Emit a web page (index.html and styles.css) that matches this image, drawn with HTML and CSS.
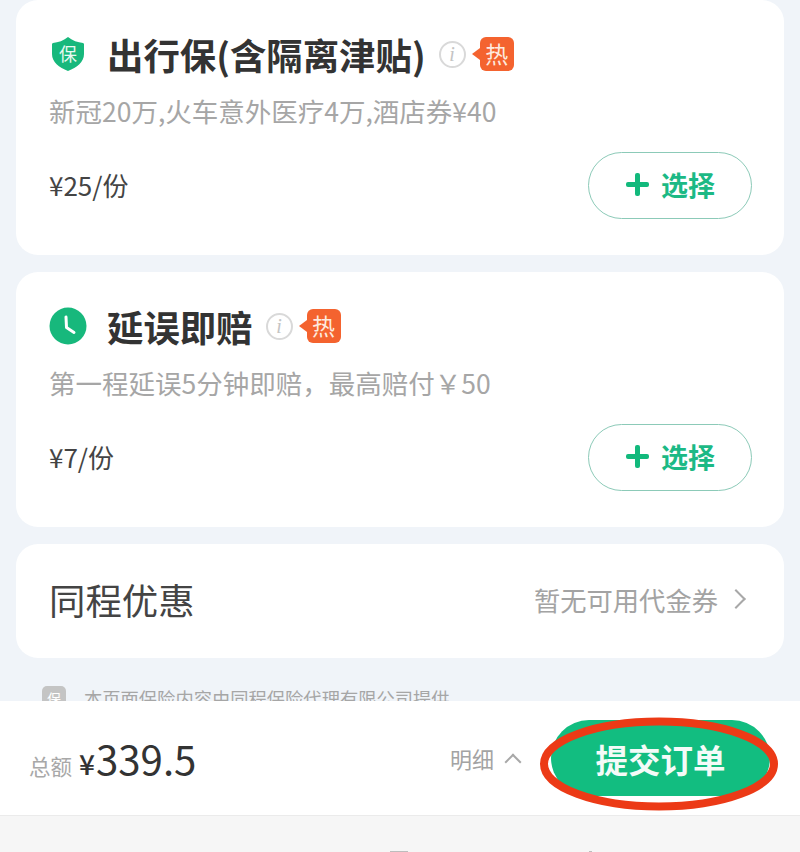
FILE: index.html
```html
<!DOCTYPE html>
<html lang="zh-CN">
<head>
    <meta charset="UTF-8">
    <meta name="viewport" content="width=device-width, initial-scale=1.0">
    <title>提交订单</title>
    <link rel="stylesheet" href="styles.css">
</head>
<body>
    <div class="content">
        <div class="card card-product">
            <div class="title-row">
                <svg class="icon-shield" viewBox="0 0 32 34">
                    <path d="M16 0 C20 3.500 26 5.500 31 6 Q32 6.200 32 7.500 L32 17 C32 25 25 30.500 16 34 C7 30.500 0 25 0 17 L0 7.500 Q0 6.200 1 6 C6 5.500 12 3.500 16 0 Z" fill="#17b87c"/>
                    <text x="16" y="23.500" text-anchor="middle" class="shield-text">保</text>
                </svg>
                <h2>出行保(含隔离津贴)</h2>
                <span class="info">i</span>
                <span class="hot">热</span>
            </div>
            <p class="desc">新冠20万,火车意外医疗4万,酒店券¥40</p>
            <div class="price-row">
                <span class="price">¥25/份</span>
                <button class="btn-select"><span class="plus"></span>选择</button>
            </div>
        </div>

        <div class="card card-product">
            <div class="title-row">
                <svg class="icon-clock" viewBox="0 0 38 38">
                    <circle cx="19" cy="19" r="18.500" fill="#17b87c"/>
                    <path d="M17 10 L17.500 20.500 L25 25.500" fill="none" stroke="#fff" stroke-width="3" stroke-linecap="round" stroke-linejoin="round"/>
                </svg>
                <h2>延误即赔</h2>
                <span class="info">i</span>
                <span class="hot">热</span>
            </div>
            <p class="desc">第一程延误5分钟即赔，最高赔付￥50</p>
            <div class="price-row">
                <span class="price">¥7/份</span>
                <button class="btn-select"><span class="plus"></span>选择</button>
            </div>
        </div>

        <div class="card card-coupon">
            <span class="coupon-title">同程优惠</span>
            <span class="coupon-value">暂无可用代金券<span class="chevron-right"></span></span>
        </div>

        <div class="notice">
            <span class="notice-icon">保</span>
            <span>本页面保险内容由同程保险代理有限公司提供</span>
        </div>
    </div>

    <div class="bar">
        <div class="total">
            <span class="total-label">总额</span>
            <span class="total-yen">¥</span>
            <span class="total-num">339.5</span>
        </div>
        <div class="detail">明细<span class="chevron-up"></span></div>
        <div class="submit-wrap">
            <button class="btn-submit">提交订单</button>
            <svg class="circle-mark" viewBox="0 0 240 100">
                <ellipse cx="120" cy="50" rx="115" ry="42.500" fill="none" stroke="#ec3a16" stroke-width="8"/>
            </svg>
        </div>
    </div>
    <div class="bottom-strip">
        <span class="nav-tip nav-tip-a"></span>
        <span class="nav-tip nav-tip-b"></span>
    </div>
</body>
</html>
```

FILE: styles.css
```css
* {
    box-sizing: border-box;
}

body {
    font-family: "Noto Sans CJK SC", "Noto Sans", sans-serif;
    margin: 0;
    height: 852px;
    overflow: hidden;
    display: flex;
    flex-direction: column;
    background-color: #f6f6f6;
}

.content {
    height: 701px;
    overflow: hidden;
    padding: 0 16px;
    background-color: #f0f4f9;
}

.card {
    background-color: #fff;
    border-radius: 22px;
    margin-bottom: 17px;
}

.card-product {
    height: 255px;
    padding: 33px 32px 0 33px;
}

.title-row {
    display: flex;
    align-items: center;
    height: 42px;
}

.icon-shield {
    width: 32px;
    height: 34px;
    margin: 0 23px 0 3px;
}

.shield-text {
    font-size: 18px;
    fill: #e8f8f1;
}

.icon-clock {
    width: 38px;
    height: 38px;
    margin-right: 20px;
}

h2 {
    margin: 0;
    font-size: 36.400px;
    line-height: 42px;
    font-weight: 700;
    color: #333;
}

.info {
    width: 27px;
    height: 27px;
    margin-left: 13px;
    border: 2px solid #d9d9d9;
    border-radius: 50%;
    font-family: "Liberation Serif", serif;
    font-style: italic;
    font-size: 20px;
    line-height: 23px;
    text-align: center;
    color: #c4c4c4;
}

.hot {
    position: relative;
    width: 34px;
    height: 34px;
    margin-left: 14px;
    border-radius: 6px;
    background-color: #f4632f;
    color: #fdeadf;
    font-size: 23px;
    line-height: 33px;
    text-align: center;
}

.hot::before {
    content: "";
    position: absolute;
    left: -8px;
    top: 11px;
    border-top: 6px solid transparent;
    border-bottom: 6px solid transparent;
    border-right: 8px solid #f4632f;
}

.desc {
    margin: 17px 0 0;
    font-size: 26.500px;
    line-height: 38px;
    color: #a6a6a6;
}

.price-row {
    display: flex;
    justify-content: space-between;
    align-items: center;
    margin-top: 22px;
}

.price {
    padding-bottom: 3px;
    font-size: 26px;
    color: #444;
}

.btn-select {
    display: flex;
    align-items: center;
    justify-content: center;
    width: 164px;
    height: 67px;
    padding: 0 0 3px;
    background-color: #fff;
    border: 1.5px solid #8ccab8;
    border-radius: 34px;
    color: #1cb985;
    font-family: inherit;
    font-size: 27px;
    font-weight: 700;
}

.plus {
    position: relative;
    width: 23px;
    height: 23px;
    margin: 0 12px 0 1px;
}

.plus::before,
.plus::after {
    content: "";
    position: absolute;
    background-color: #12b97c;
    border-radius: 2px;
}

.plus::before {
    left: 0;
    right: 0;
    top: 9px;
    height: 5px;
}

.plus::after {
    top: 0;
    bottom: 0;
    left: 9px;
    width: 5px;
}

.card-coupon {
    display: flex;
    justify-content: space-between;
    align-items: center;
    height: 114px;
    margin-bottom: 0;
    padding: 0 41px 4px 33px;
}

.coupon-title {
    font-size: 36.400px;
    color: #444;
}

.coupon-value {
    display: flex;
    align-items: center;
    font-size: 26.300px;
    color: #a3a3a3;
}

.chevron-right {
    width: 14px;
    height: 14px;
    margin-left: 11px;
    border-top: 2px solid #a8a8a8;
    border-right: 2px solid #a8a8a8;
    transform: rotate(45deg);
}

.notice {
    display: flex;
    align-items: center;
    margin-top: 27px;
    padding-left: 26px;
    font-size: 18.300px;
    line-height: 26px;
    color: #a6a6a6;
}

.notice-icon {
    width: 24px;
    height: 24px;
    margin-right: 18px;
    border-radius: 5px;
    background-color: #c4c4c4;
    color: #fff;
    font-size: 14px;
    line-height: 24px;
    text-align: center;
}

.bar {
    display: flex;
    align-items: center;
    height: 115px;
    padding: 0 30px 0 29px;
    background-color: #fff;
    border-bottom: 1px solid #ebebeb;
}

.total {
    display: flex;
    align-items: baseline;
    flex: 1;
    color: #333;
}

.total-label {
    font-size: 21.500px;
    color: #a8a8a8;
    margin-right: 7px;
}

.total-yen {
    font-size: 28px;
    font-weight: 500;
    margin-right: 1px;
}

.total-num {
    font-size: 40.200px;
    line-height: 56px;
}

.detail {
    display: flex;
    align-items: center;
    font-size: 22px;
    color: #a3a3a3;
    margin-right: 32px;
}

.chevron-up {
    width: 12px;
    height: 12px;
    margin: 8px 0 0 13px;
    border-top: 2px solid #a8a8a8;
    border-left: 2px solid #a8a8a8;
    transform: rotate(45deg);
}

.submit-wrap {
    position: relative;
}

.btn-submit {
    display: block;
    width: 219px;
    height: 76px;
    padding: 0;
    border: none;
    border-radius: 38px;
    background-color: #12bd80;
    color: #f4fbf8;
    font-family: inherit;
    font-size: 32.500px;
    font-weight: 700;
}

.circle-mark {
    position: absolute;
    left: -12px;
    top: -6px;
    width: 240px;
    height: 100px;
}

.bottom-strip {
    flex: 1;
    display: flex;
    align-items: flex-end;
    padding-left: 390px;
}

.nav-tip {
    height: 1px;
    background-color: #bdbdbd;
}

.nav-tip-a {
    width: 18px;
}

.nav-tip-b {
    width: 3px;
    margin-left: 181px;
}
```
